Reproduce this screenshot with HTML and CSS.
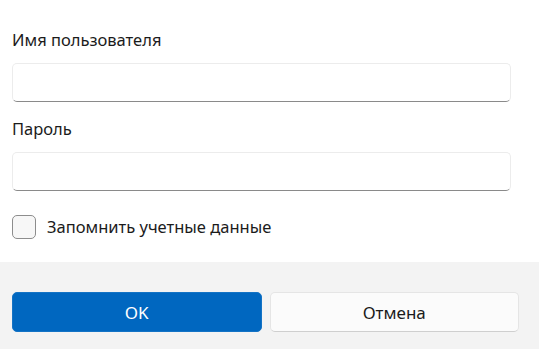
FILE: index.html
```html
<!DOCTYPE html>
<html lang="ru">
<head>
    <meta charset="UTF-8">
    <meta name="viewport" content="width=device-width, initial-scale=1.0">
    <title>Вход</title>
    <link rel="stylesheet" href="styles.css">
</head>
<body>

    <!-- Credentials -->
    <div class="content">
        <label class="field-label" for="username">Имя пользователя</label>
        <input class="text-input" id="username" type="text">

        <label class="field-label" for="password">Пароль</label>
        <input class="text-input" id="password" type="password">

        <label class="remember">
            <span class="checkbox"></span>
            <span>Запомнить учетные данные</span>
        </label>
    </div>

    <!-- Buttons -->
    <div class="footer">
        <button class="btn btn-primary">OK</button>
        <button class="btn btn-secondary">Отмена</button>
    </div>

</body>
</html>
```

FILE: styles.css
```css
/* Basic Reset */
* {
    margin: 0;
    padding: 0;
    box-sizing: border-box;
}

body {
    font-family: "Noto Sans", "Open Sans", sans-serif;
    font-size: 16.5px;
    color: #1b1b1b;
    background-color: #fff;
    height: 349px;
    display: flex;
    flex-direction: column;
    overflow: hidden;
}

/* Credentials */
.content {
    flex: 1;
    padding: 30px 28px 0 12px;
    display: flex;
    flex-direction: column;
}

.field-label {
    display: block;
    line-height: 20px;
    margin-bottom: 13px;
}

.text-input {
    height: 39px;
    width: 100%;
    border: 1px solid #ececec;
    border-bottom: 1px solid #8a8a8a;
    border-radius: 5px;
    background-color: #fff;
    margin-bottom: 17px;
    outline: none;
}

.remember {
    display: flex;
    align-items: center;
    gap: 11px;
    line-height: 20px;
    margin-top: 7px;
}

.checkbox {
    width: 24px;
    height: 24px;
    border: 1px solid #8d8d8d;
    border-radius: 5px;
    background-color: #f7f7f7;
}

/* Buttons */
.footer {
    height: 87px;
    background-color: #f3f3f3;
    padding: 30px 20px 0 12px;
    display: flex;
    gap: 8px;
}

.btn {
    flex: 1;
    height: 40px;
    font-family: inherit;
    font-size: 17px;
    border-radius: 5px;
}

.btn-primary {
    background-color: #0067c0;
    color: #fff;
    border: 1px solid #1473c5;
}

.btn-secondary {
    background-color: #fbfbfb;
    color: #1b1b1b;
    border: 1px solid #e5e5e5;
    border-bottom-color: #cfcfcf;
}
```
